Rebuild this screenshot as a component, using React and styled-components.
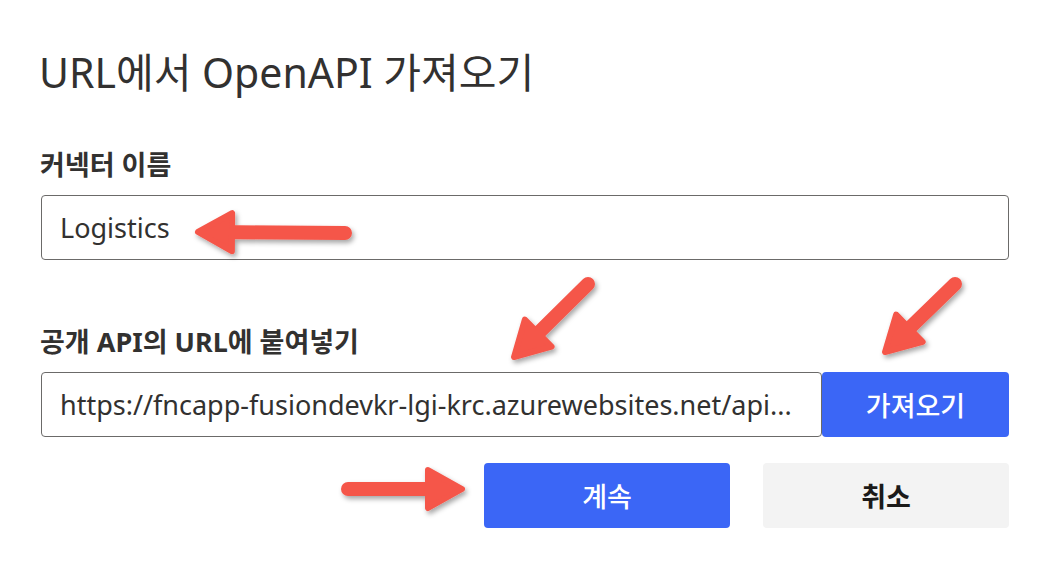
import React from "react";
import styled, { createGlobalStyle } from "styled-components";

const Global = createGlobalStyle`
  html, body { margin: 0; padding: 0; background: #ffffff; }
  body { font-family: "Noto Sans", "Noto Sans CJK KR", sans-serif; color: #323130; }
`;

const Page = styled.div`
  position: relative;
  width: 1050px;
  height: 569px;
  box-sizing: border-box;
  padding: 40px 41px 0 41px;
  display: flex;
  flex-direction: column;
  overflow: hidden;
`;

const Title = styled.h1`
  margin: 0 0 0 -2px;
  font-family: "Noto Sans", "Noto Sans CJK KR", sans-serif;
  font-weight: 400;
  font-size: 41px;
  line-height: 64px;
  color: #323130;
`;

const Field = styled.div`
  display: flex;
  flex-direction: column;
  margin-top: ${(p) => p.$top}px;
`;

const Label = styled.label`
  font-family: "Noto Sans", "Noto Sans CJK KR", sans-serif;
  font-weight: 700;
  font-size: 27px;
  line-height: 36px;
  margin-left: -1px;
  margin-bottom: 12px;
  color: #323130;
`;

const InputRow = styled.div`
  display: flex;
  align-items: stretch;
`;

const TextBox = styled.div`
  flex: ${(p) => (p.$fill ? "1 1 0" : "none")};
  min-width: 0;
  height: 65px;
  box-sizing: border-box;
  border: 1.5px solid #6b6a69;
  border-radius: 4px;
  padding: 0 18px;
  display: flex;
  align-items: center;
  font-family: "Noto Sans", "Noto Sans CJK KR", sans-serif;
  font-size: 27px;
  color: #323130;
  white-space: nowrap;
  overflow: hidden;
`;

const Button = styled.button`
  height: 65px;
  width: ${(p) => p.$width}px;
  box-sizing: border-box;
  border: none;
  border-radius: 4px;
  background: ${(p) => (p.$primary ? "#3b66f6" : "#f3f3f3")};
  color: ${(p) => (p.$primary ? "#ffffff" : "#1b1a19")};
  font-family: "Noto Sans", "Noto Sans CJK KR", sans-serif;
  font-size: 27px;
  font-weight: ${(p) => (p.$primary ? 500 : 700)};
  display: flex;
  align-items: center;
  justify-content: center;
  padding: 0;
  flex-shrink: 0;
`;

const Footer = styled.div`
  display: flex;
  justify-content: flex-end;
  gap: 33px;
  margin-top: 26px;
`;

const Overlay = styled.svg`
  position: absolute;
  left: 0;
  top: 0;
  width: 1050px;
  height: 569px;
  pointer-events: none;
  overflow: visible;
`;

const arrows = [
  { tail: [345, 233], tip: [198, 232] },
  { tail: [588, 284], tip: [514, 357] },
  { tail: [955, 284], tip: [885, 352] },
  { tail: [348, 489], tip: [462, 489] },
];

function Arrow({ tail, tip }) {
  const [x1, y1] = tail;
  const [x2, y2] = tip;
  const dx = x2 - x1;
  const dy = y2 - y1;
  const len = Math.hypot(dx, dy);
  const ux = dx / len;
  const uy = dy / len;
  const px = -uy;
  const py = ux;
  const headLen = 34;
  const headW = 19;
  const bx = x2 - ux * headLen;
  const by = y2 - uy * headLen;
  const shaftEndX = x2 - ux * 14;
  const shaftEndY = y2 - uy * 14;
  const w1 = [bx + px * headW, by + py * headW];
  const w2 = [bx - px * headW, by - py * headW];
  return (
    <g>
      <line
        x1={x1}
        y1={y1}
        x2={shaftEndX}
        y2={shaftEndY}
        stroke="#f5564a"
        strokeWidth="14"
        strokeLinecap="round"
      />
      <polygon
        points={`${x2},${y2} ${w1[0]},${w1[1]} ${w2[0]},${w2[1]}`}
        fill="#f5564a"
        stroke="#f5564a"
        strokeWidth="6"
        strokeLinejoin="round"
      />
    </g>
  );
}

export default function App() {
  return (
    <>
      <Global />
      <Page>
        <Title>URL에서 OpenAPI 가져오기</Title>
        <Field $top={43}>
          <Label>커넥터 이름</Label>
          <TextBox>Logistics</TextBox>
        </Field>
        <Field $top={64}>
          <Label>공개 API의 URL에 붙여넣기</Label>
          <InputRow>
            <TextBox $fill>https://fncapp-fusiondevkr-lgi-krc.azurewebsites.net/api...</TextBox>
            <Button $primary $width={187}>가져오기</Button>
          </InputRow>
        </Field>
        <Footer>
          <Button $primary $width={246}>계속</Button>
          <Button $width={246}>취소</Button>
        </Footer>
        <Overlay viewBox="0 0 1050 569">
          <defs>
            <filter id="shadow" x="-20%" y="-20%" width="140%" height="140%">
              <feDropShadow dx="2" dy="3" stdDeviation="2.5" floodColor="#000" floodOpacity="0.35" />
            </filter>
          </defs>
          <g filter="url(#shadow)">
            {arrows.map((a, i) => (
              <Arrow key={i} {...a} />
            ))}
          </g>
        </Overlay>
      </Page>
    </>
  );
}
